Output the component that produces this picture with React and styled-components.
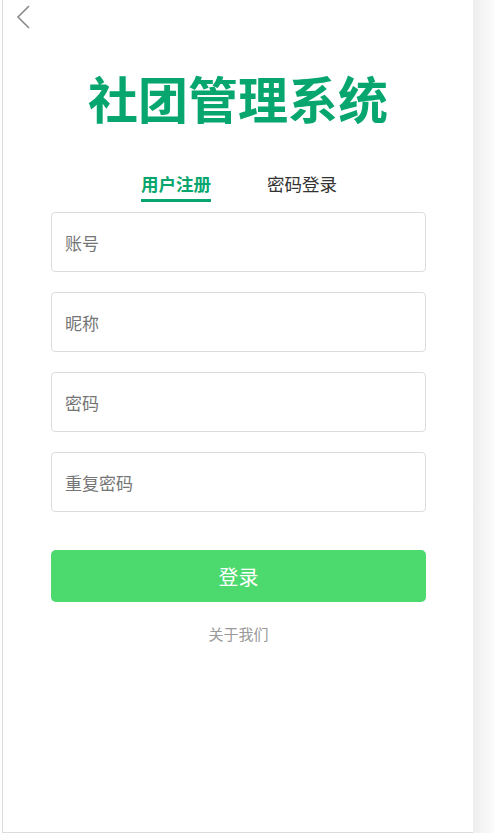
import styled, { createGlobalStyle } from "styled-components";

const GlobalStyle = createGlobalStyle`
  html, body {
    margin: 0;
    padding: 0;
    background: #fff;
  }
  body {
    font-family: "Noto Sans CJK SC", "Noto Sans", sans-serif;
  }
`;

const Page = styled.div`
  display: flex;
  height: 833px;
  padding-left: 2px;
  box-sizing: border-box;
`;

const Panel = styled.div`
  width: 471px;
  height: 833px;
  box-sizing: border-box;
  border-left: 1px solid #dcdcdc;
  border-bottom: 1px solid #dcdcdc;
  background: #fff;
  display: flex;
  flex-direction: column;
`;

const Side = styled.div`
  flex: 1;
  background: linear-gradient(to right, #eeeeee, #f6f6f6 60%, #fbfbfb);
`;

const TopBar = styled.div`
  height: 34px;
  display: flex;
  align-items: flex-start;
  padding-left: 12px;
  padding-top: 4px;
  box-sizing: border-box;
`;

const BackButton = styled.button`
  border: none;
  background: none;
  padding: 0;
  width: 20px;
  height: 26px;
  cursor: pointer;
`;

const Title = styled.h1`
  margin: 33px 0 0;
  height: 60px;
  line-height: 60px;
  text-align: center;
  font-size: 50px;
  font-weight: 700;
  color: #06a66e;
  letter-spacing: 0;
  padding-right: 0;
`;

const Tabs = styled.div`
  display: flex;
  justify-content: center;
  gap: 56px;
  margin-top: 45px;
  padding-left: 2px;
`;

const Tab = styled.div`
  font-size: 17.5px;
  line-height: 24px;
  padding-bottom: 3px;
  border-bottom: 3px solid ${(p) => (p.$active ? "#06a66e" : "transparent")};
  color: ${(p) => (p.$active ? "#06a66e" : "#333")};
  font-weight: ${(p) => (p.$active ? 700 : 400)};
  cursor: pointer;
`;

const Form = styled.form`
  width: 375px;
  margin: 10px 0 0 48px;
  display: flex;
  flex-direction: column;
  gap: 20px;
`;

const Input = styled.input`
  height: 60px;
  box-sizing: border-box;
  border: 1px solid #dcdcdc;
  border-radius: 4px;
  padding: 0 13px;
  font-family: inherit;
  font-size: 17px;
  color: #333;
  outline: none;

  &::placeholder {
    color: #757575;
  }
`;

const SubmitButton = styled.button`
  margin-top: 18px;
  height: 52px;
  border: none;
  border-radius: 5px;
  background: #4cd96e;
  color: #fff;
  font-family: inherit;
  font-size: 20px;
  cursor: pointer;
`;

const About = styled.div`
  margin-top: 2px;
  text-align: center;
  font-size: 15px;
  line-height: 20px;
  color: #999;
  padding-right: 0;
`;

export default function App() {
  return (
    <>
      <GlobalStyle />
      <Page>
        <Panel>
          <TopBar>
            <BackButton aria-label="返回">
              <svg width="20" height="26" viewBox="0 0 20 26">
                <polyline
                  points="14,2 3,13 14,24"
                  fill="none"
                  stroke="#8a8a8a"
                  strokeWidth="1.6"
                />
              </svg>
            </BackButton>
          </TopBar>

          <Title>社团管理系统</Title>

          <Tabs>
            <Tab $active>用户注册</Tab>
            <Tab>密码登录</Tab>
          </Tabs>

          <Form onSubmit={(e) => e.preventDefault()}>
            <Input placeholder="账号" />
            <Input placeholder="昵称" />
            <Input type="password" placeholder="密码" />
            <Input type="password" placeholder="重复密码" />
            <SubmitButton type="submit">登录</SubmitButton>
            <About>关于我们</About>
          </Form>
        </Panel>
        <Side />
      </Page>
    </>
  );
}
